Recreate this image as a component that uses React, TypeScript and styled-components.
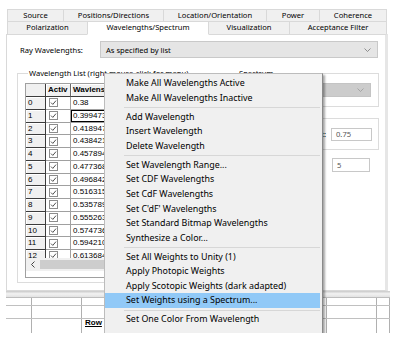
import React from 'react';
import styled, { createGlobalStyle } from 'styled-components';

const GlobalStyle = createGlobalStyle`
  html, body {
    margin: 0;
    padding: 0;
    background: #fff;
  }
  body {
    font-family: "Noto Sans", "Open Sans", sans-serif;
    color: #000;
  }
`;

const Screen = styled.div`
  width: 398px;
  height: 338px;
  background: #fff;
  overflow: hidden;
`;

const Clip = styled.div`
  position: relative;
  height: 333px;
  overflow: hidden;
  padding-top: 9px;
  box-sizing: border-box;
`;

const Dialog = styled.div`
  margin-left: 6px;
  width: 382px;
`;

const TabRow = styled.div<{ $second?: boolean }>`
  display: flex;
  padding-left: 1px;
  height: ${p => (p.$second ? 14 : 13)}px;
  margin-top: ${p => (p.$second ? -1 : 0)}px;
`;

const Tab = styled.div<{ $w: number; $active?: boolean }>`
  box-sizing: border-box;
  width: ${p => p.$w + 1}px;
  margin-right: -1px;
  border: 1px solid #d9d9d9;
  border-bottom-color: ${p => (p.$active ? '#fff' : '#d9d9d9')};
  background: ${p => (p.$active ? '#fff' : '#f0f0f0')};
  position: relative;
  z-index: ${p => (p.$active ? 2 : 0)};
  font-size: 7.6px;
  line-height: 11px;
  text-align: center;
  white-space: nowrap;
`;

const Panel = styled.div`
  box-sizing: border-box;
  height: 257px;
  margin-top: -1px;
  border: 1px solid #d9d9d9;
  border-right: 3px solid #e6e6e6;
  background: #fff;
  padding: 6px 0 0 10px;
  position: relative;
  z-index: 1;
`;

const RayRow = styled.div`
  display: flex;
  align-items: center;
  height: 17px;
  padding-left: 3px;
`;

const FieldLabel = styled.div`
  width: 80px;
  font-size: 7.6px;
  white-space: nowrap;
`;

const Combo = styled.div<{ $disabled?: boolean }>`
  box-sizing: border-box;
  display: flex;
  align-items: center;
  justify-content: space-between;
  width: ${p => (p.$disabled ? '100%' : '278px')};
  height: ${p => (p.$disabled ? 14 : 17)}px;
  padding: 0 6px 0 5px;
  border: 1px solid ${p => (p.$disabled ? '#c4c4c4' : '#c9c9c9')};
  background: ${p => (p.$disabled ? '#cccccc' : '#e5e5e5')};
  font-size: 7.6px;
  white-space: nowrap;
`;

const Chevron = ({ color }: { color: string }) => (
  <svg width="7" height="4" viewBox="0 0 7 4">
    <polyline points="0.5,0.5 3.5,3.5 6.5,0.5" fill="none" stroke={color} strokeWidth="0.8" />
  </svg>
);

const ContentRow = styled.div`
  display: flex;
  gap: 6px;
  margin-top: 9px;
`;

const Group = styled.fieldset`
  box-sizing: border-box;
  margin: 0;
  width: 205px;
  height: 216px;
  padding: 4px 0 0 7px;
  border: 1px solid #dcdcdc;
  min-width: 0;
`;

const Legend = styled.legend<{ $shift: number }>`
  padding: 0 1px;
  margin-left: ${p => p.$shift}px;
  font-size: 7.6px;
  line-height: 12px;
  white-space: nowrap;
`;

const TableFrame = styled.div`
  box-sizing: border-box;
  width: 200px;
  height: 195px;
  border: 1px solid #a0a0a0;
  border-right: none;
  background: #fff;
  font-family: "Liberation Sans", Arial, sans-serif;
  font-size: 8px;
`;

const TableView = styled.div`
  height: 174px;
  overflow: hidden;
`;

const GridRow = styled.div<{ $h: number }>`
  display: grid;
  grid-template-columns: 20px 25px 154px;
  height: ${p => p.$h}px;
`;

const CornerCell = styled.div`
  box-sizing: border-box;
  background: #f0f0f0;
  border-right: 1px solid #3c3c3c;
  border-bottom: 1px solid #3c3c3c;
`;

const HeadCell = styled.div`
  box-sizing: border-box;
  background: #f0f0f0;
  border-right: 1px solid #6a6a6a;
  border-bottom: 1px solid #3c3c3c;
  box-shadow: inset 1px 1px 0 #fff;
  padding-left: 2px;
  font-weight: bold;
  line-height: 12px;
  white-space: nowrap;
  overflow: hidden;
`;

const RowHead = styled.div`
  box-sizing: border-box;
  background: #f0f0f0;
  border-right: 1px solid #3c3c3c;
  border-bottom: 1px solid #3c3c3c;
  box-shadow: inset 1px 1px 0 #fff;
  padding-left: 2px;
  line-height: 11.75px;
`;

const CheckCell = styled.div`
  box-sizing: border-box;
  display: flex;
  align-items: center;
  padding-left: 3px;
  border-right: 1px solid #a0a0a0;
  border-bottom: 1px solid #a0a0a0;
`;

const CheckBox = styled.div`
  box-sizing: border-box;
  width: 9px;
  height: 9px;
  border: 1px solid #8c8c8c;
  background: #fff;
  display: flex;
`;

const DataCell = styled.div<{ $focus?: boolean }>`
  box-sizing: border-box;
  border-right: 1px solid #a0a0a0;
  border-bottom: 1px solid #a0a0a0;
  padding-left: 2px;
  line-height: 11.75px;
  white-space: nowrap;
  box-shadow: ${p => (p.$focus ? 'inset 0 0 0 1px #000' : 'none')};
`;

const ScrollBar = styled.div`
  display: flex;
  height: 13px;
  background: #f0f0f0;
`;

const ScrollArrow = styled.div`
  width: 14px;
  display: flex;
  align-items: center;
  justify-content: center;
`;

const ScrollThumb = styled.div`
  flex: 1;
  margin: 2px 0;
  background: #cdcdcd;
`;

const SideColumn = styled.div`
  width: 151px;
  display: flex;
  flex-direction: column;
`;

const SpectrumGroup = styled.fieldset`
  box-sizing: border-box;
  margin: 0;
  height: 40px;
  padding: 4px 7px 0 7px;
  border: 1px solid #dcdcdc;
  min-width: 0;
`;

const OptionBox = styled.div`
  box-sizing: border-box;
  display: flex;
  align-items: center;
  justify-content: flex-end;
  gap: 5px;
  height: 32px;
  margin-top: 11px;
  padding-right: 6px;
  border: 1px solid #dcdcdc;
`;

const InputRow = styled.div`
  display: flex;
  align-items: center;
  justify-content: flex-end;
  gap: 16px;
  margin-top: 8px;
  padding-right: 9px;
`;

const SmallLabel = styled.div`
  font-size: 7.6px;
  white-space: nowrap;
`;

const TextInput = styled.div<{ $w: number; $h: number }>`
  box-sizing: border-box;
  width: ${p => p.$w}px;
  height: ${p => p.$h}px;
  border: 1px solid #c8c8c8;
  background: #fff;
  padding-left: 4px;
  font-size: 7.6px;
  line-height: ${p => p.$h - 2}px;
  color: #555;
`;

const LowerSheet = styled.div`
  width: 384px;
  margin-left: 6px;
`;

const SheetBand = styled.div`
  height: 6px;
  background: linear-gradient(#c8c8c8, #f2f2f2 45%, #e2e2e2);
  border-bottom: 1px solid #bdbdbd;
`;

const SheetRow = styled.div<{ $h: number }>`
  display: grid;
  grid-template-columns: 26px 50px 245px 50px 13px;
  height: ${p => p.$h}px;
  border-bottom: 1px solid #c0c0c0;
  box-sizing: border-box;
`;

const SheetCell = styled.div`
  border-right: 1px solid #b0b0b0;
  font-family: "Liberation Sans", Arial, sans-serif;
  font-size: 8px;
  font-weight: bold;
  padding-left: 3px;
  line-height: 8px;
`;

const RowTag = styled.span`
  text-decoration: underline;
`;

const Menu = styled.div`
  position: absolute;
  left: 104px;
  top: 73px;
  width: 219px;
  height: 270px;
  box-sizing: border-box;
  padding-top: 2px;
  background: #f0f0f0;
  border: 1px solid #bcbcbc;
  border-right-color: #8a8a8a;
  box-shadow: 2px 2px 2px rgba(0, 0, 0, 0.35);
  z-index: 10;
`;

const MenuItem = styled.div<{ $hot?: boolean }>`
  height: 14.6px;
  line-height: 14.6px;
  padding-left: 21px;
  margin-right: 2px;
  background: ${p => (p.$hot ? '#91c9f7' : 'transparent')};
  font-size: 8.9px;
  white-space: nowrap;
`;

const MenuSeparator = styled.div`
  height: 0;
  margin: 1.5px 2px 1.9px 19px;
  border-top: 1px solid #d7d7d7;
`;

const topTabs = [
  { label: 'Source', w: 56 },
  { label: 'Positions/Directions', w: 100 },
  { label: 'Location/Orientation', w: 103 },
  { label: 'Power', w: 53 },
  { label: 'Coherence', w: 67 },
];

const bottomTabs = [
  { label: 'Polarization', w: 80 },
  { label: 'Wavelengths/Spectrum', w: 121, active: true },
  { label: 'Visualization', w: 81 },
  { label: 'Acceptance Filter', w: 97 },
];

const wavelengths = [
  '0.38', '0.399473', '0.418947', '0.438421', '0.457894', '0.477368', '0.496842',
  '0.516315', '0.535789', '0.555263', '0.574736', '0.594210', '0.613684', '0.633157',
];

const menuGroups = [
  ['Make All Wavelengths Active', 'Make All Wavelengths Inactive'],
  ['Add Wavelength', 'Insert Wavelength', 'Delete Wavelength'],
  [
    'Set Wavelength Range...',
    'Set CDF Wavelengths',
    'Set CdF Wavelengths',
    "Set C'dF' Wavelengths",
    'Set Standard Bitmap Wavelengths',
    'Synthesize a Color...',
  ],
  [
    'Set All Weights to Unity (1)',
    'Apply Photopic Weights',
    'Apply Scotopic Weights (dark adapted)',
    'Set Weights using a Spectrum...',
  ],
  ['Set One Color From Wavelength'],
];

const Check = () => (
  <svg width="7" height="7" viewBox="0 0 7 7">
    <polyline points="1,3.6 2.8,5.4 6,1.6" fill="none" stroke="#3a3a3a" strokeWidth="0.9" />
  </svg>
);

const App: React.FC = () => {
  return (
    <Screen>
      <GlobalStyle />
      <Clip>
        <Dialog>
          <TabRow>
            {topTabs.map(t => (
              <Tab key={t.label} $w={t.w}>{t.label}</Tab>
            ))}
          </TabRow>
          <TabRow $second>
            {bottomTabs.map(t => (
              <Tab key={t.label} $w={t.w} $active={t.active}>{t.label}</Tab>
            ))}
          </TabRow>

          <Panel>
            <RayRow>
              <FieldLabel>Ray Wavelengths:</FieldLabel>
              <Combo>
                <span>As specified by list</span>
                <Chevron color="#777" />
              </Combo>
            </RayRow>

            <ContentRow>
              <Group>
                <Legend $shift={3}>Wavelength List (right mouse-click for menu)</Legend>
                <TableFrame>
                  <TableView>
                    <GridRow $h={13}>
                      <CornerCell />
                      <HeadCell>Activ</HeadCell>
                      <HeadCell>Wavlens</HeadCell>
                    </GridRow>
                    {wavelengths.map((w, i) => (
                      <GridRow key={i} $h={12.75}>
                        <RowHead>{i}</RowHead>
                        <CheckCell>
                          <CheckBox><Check /></CheckBox>
                        </CheckCell>
                        <DataCell $focus={i === 1}>{w}</DataCell>
                      </GridRow>
                    ))}
                  </TableView>
                  <ScrollBar>
                    <ScrollArrow>
                      <svg width="4" height="7" viewBox="0 0 4 7">
                        <polyline points="3.5,0.5 0.5,3.5 3.5,6.5" fill="none" stroke="#333" strokeWidth="0.9" />
                      </svg>
                    </ScrollArrow>
                    <ScrollThumb />
                  </ScrollBar>
                </TableFrame>
              </Group>

              <SideColumn>
                <SpectrumGroup>
                  <Legend $shift={2}>Spectrum</Legend>
                  <Combo $disabled>
                    <span />
                    <Chevron color="#9a9a9a" />
                  </Combo>
                </SpectrumGroup>
                <OptionBox>
                  <SmallLabel>Exponent:</SmallLabel>
                  <TextInput $w={41} $h={13}>0.75</TextInput>
                </OptionBox>
                <InputRow>
                  <SmallLabel>Samples</SmallLabel>
                  <TextInput $w={38} $h={14}>5</TextInput>
                </InputRow>
              </SideColumn>
            </ContentRow>
          </Panel>
        </Dialog>

        <LowerSheet>
          <SheetBand />
          <SheetRow $h={8}>
            <SheetCell /><SheetCell /><SheetCell /><SheetCell /><SheetCell />
          </SheetRow>
          <SheetRow $h={13}>
            <SheetCell /><SheetCell /><SheetCell /><SheetCell /><SheetCell />
          </SheetRow>
          <SheetRow $h={16}>
            <SheetCell /><SheetCell />
            <SheetCell><RowTag>Row</RowTag></SheetCell>
            <SheetCell /><SheetCell />
          </SheetRow>
        </LowerSheet>

        <Menu>
          {menuGroups.map((group, gi) => (
            <React.Fragment key={gi}>
              {gi > 0 && <MenuSeparator />}
              {group.map(item => (
                <MenuItem key={item} $hot={item === 'Set Weights using a Spectrum...'}>
                  {item}
                </MenuItem>
              ))}
            </React.Fragment>
          ))}
        </Menu>
      </Clip>
    </Screen>
  );
};

export default App;
